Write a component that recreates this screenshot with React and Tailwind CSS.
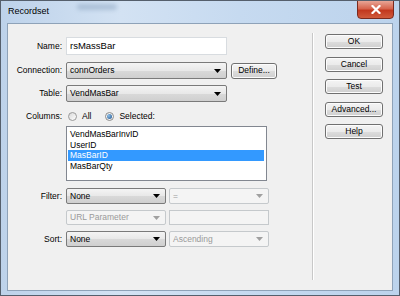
import React from "react";

const font = { fontFamily: '"Liberation Sans", Arial, sans-serif' };

function Arrow({ disabled }) {
  return (
    <svg width="7" height="4" viewBox="0 0 7 4" className="shrink-0">
      <path d="M0 0h7L3.5 4z" fill={disabled ? "#a0a0a0" : "#000"} />
    </svg>
  );
}

function Select({ w, value, disabled, h = "h-[17px]" }) {
  return (
    <div
      className={`${w} ${h} flex items-center justify-between pl-[3px] pr-[5px] rounded-[2px] border ${
        disabled
          ? "border-[#c5c9cc] bg-[#f4f4f4] text-[#9a9a9a]"
          : "border-[#7a7a7a] bg-[linear-gradient(#f4f4f4,#e8e8e8_50%,#d9d9d9_51%,#cfcfcf)] text-black"
      }`}
    >
      <span>{value}</span>
      <Arrow disabled={disabled} />
    </div>
  );
}

function Btn({ children, className = "" }) {
  return (
    <div
      className={`flex items-center justify-center rounded-[3px] border border-[#707070] bg-[linear-gradient(#f4f4f4,#ebebeb_50%,#dddddd_51%,#cfcfcf)] shadow-[inset_0_0_0_1px_#fcfcfc] ${className}`}
    >
      {children}
    </div>
  );
}

function Label({ children }) {
  return <div className="w-[55px] text-right pr-[1px] shrink-0">{children}</div>;
}

export default function App() {
  return (
    <div
      className="w-[400px] h-[296px] relative overflow-hidden text-[8.5px] text-black border border-[#555f6c] bg-[linear-gradient(90deg,#bdd2ea,#d3e2f3_30%,#c6daf0_60%,#bcd3ec)]"
      style={font}
    >
      {/* title bar */}
      <div className="h-[22px] flex items-center pl-[7px] relative">
        <span className="text-[9px] text-black">Recordset</span>
        <div className="absolute left-[76px] top-[3px] w-[40px] h-[6px] rounded-full bg-[#8aa3bf] opacity-50 blur-[2px]" />
        <div className="absolute right-[5px] top-[-1px] w-[37px] h-[19px] rounded-b-[4px] border border-[#7a2a1f] bg-[linear-gradient(#e8a596,#d6644d_45%,#c2381f_55%,#d05a3c)] flex items-center justify-center">
          <svg width="10" height="9" viewBox="0 0 10 9">
            <path d="M1.5 1l7 7M8.5 1l-7 7" stroke="#fff" strokeWidth="2.2" strokeLinecap="square" />
          </svg>
        </div>
      </div>

      {/* panel */}
      <div className="mx-[6px] h-[268px] border border-[#8ea2b8] bg-[#f0f0f0] flex">
        {/* form */}
        <div className="w-[304px] flex flex-col">
          <div className="mt-[13px] h-[18px] flex items-center gap-[3px]">
            <Label>Name:</Label>
            <div className="w-[161px] h-[18px] flex items-center pl-[3px] bg-white border border-[#d8dce0] text-[9.5px]">
              rsMassBar
            </div>
          </div>
          <div className="mt-[7px] h-[17px] flex items-center gap-[3px]">
            <Label>Connection:</Label>
            <Select w="w-[161px]" value="connOrders" />
            <Btn className="ml-[1px] w-[46px] h-[16px]">Define...</Btn>
          </div>
          <div className="mt-[6px] h-[17px] flex items-center gap-[3px]">
            <Label>Table:</Label>
            <Select w="w-[161px]" value="VendMasBar" />
          </div>
          <div className="mt-[6px] h-[16px] flex items-center gap-[3px]">
            <Label>Columns:</Label>
            <div className="flex items-center ml-[2px]">
              <div className="w-[9px] h-[9px] rounded-full border border-[#9a9a9a] bg-[linear-gradient(135deg,#d8d8d8,#ffffff)]" />
              <span className="ml-[5px]">All</span>
              <div className="ml-[14px] w-[9px] h-[9px] rounded-full border border-[#8a8a8a] bg-[#f5f5f5] flex items-center justify-center">
                <div className="w-[5px] h-[5px] rounded-full bg-[radial-gradient(circle_at_35%_35%,#8fc0e8,#1a4f8a)]" />
              </div>
              <span className="ml-[5px]">Selected:</span>
            </div>
          </div>
          <div className="mt-[2px] flex gap-[3px]">
            <div className="w-[55px] shrink-0" />
            <div className="w-[201px] h-[55px] border border-[#828790] bg-white pt-[2px] pl-[1px] pr-[2px] flex flex-col">
              <div className="h-[10.5px] leading-[10.5px] pl-[2px]">VendMasBarInvID</div>
              <div className="h-[10.5px] leading-[10.5px] pl-[2px]">UserID</div>
              <div className="h-[10.5px] leading-[10.5px] pl-[2px] bg-[#3399ff] text-white">MasBarID</div>
              <div className="h-[10.5px] leading-[10.5px] pl-[2px]">MasBarQty</div>
            </div>
          </div>
          <div className="mt-[7px] h-[16px] flex items-center gap-[3px]">
            <Label>Filter:</Label>
            <Select w="w-[100px]" h="h-[16px]" value="None" />
            <Select w="w-[100px]" h="h-[16px]" value="=" disabled />
          </div>
          <div className="mt-[6px] h-[15px] flex items-center gap-[3px]">
            <div className="w-[55px] shrink-0" />
            <Select w="w-[100px]" h="h-[15px]" value="URL Parameter" disabled />
            <div className="w-[100px] h-[15px] border border-[#c5c9cc] bg-[#f4f4f4]" />
          </div>
          <div className="mt-[6px] h-[16px] flex items-center gap-[3px]">
            <Label>Sort:</Label>
            <Select w="w-[100px]" h="h-[16px]" value="None" />
            <Select w="w-[100px]" h="h-[16px]" value="Ascending" disabled />
          </div>
        </div>

        {/* separator */}
        <div className="mt-[9px] mb-[10px] w-px bg-[#c8c8c8] border-r border-white box-content" />

        {/* buttons */}
        <div className="ml-[11px] mt-[10px] flex flex-col gap-[7.5px]">
          <Btn className="w-[58px] h-[15px]">OK</Btn>
          <Btn className="w-[58px] h-[15px]">Cancel</Btn>
          <Btn className="w-[58px] h-[15px]">Test</Btn>
          <Btn className="w-[58px] h-[15px]">Advanced...</Btn>
          <Btn className="w-[58px] h-[15px]">Help</Btn>
        </div>
      </div>
    </div>
  );
}
